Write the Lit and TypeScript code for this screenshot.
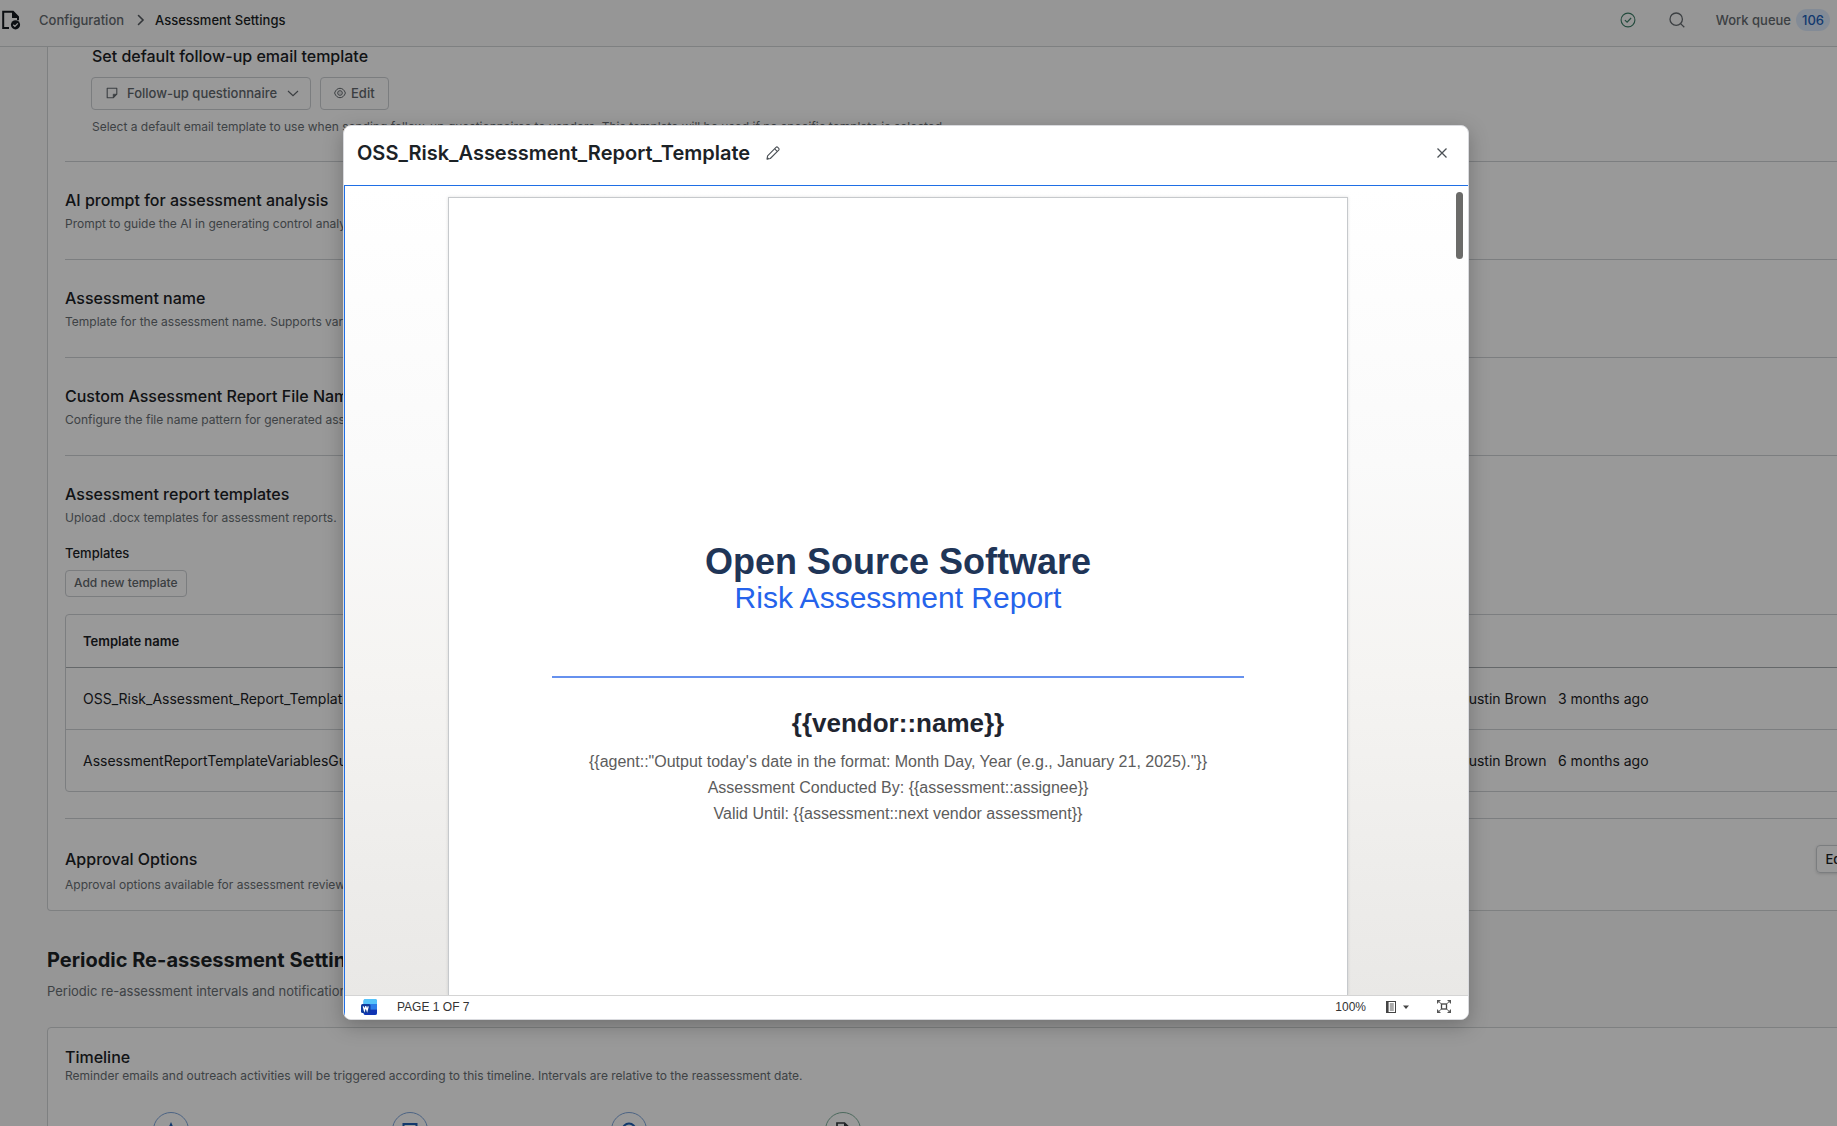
import { LitElement, html, css, svg, nothing } from "lit";
import { customElement, property } from "lit/decorators.js";

interface TemplateRow {
  name: string;
  author: string;
  uploaded: string;
}

const TEMPLATES: TemplateRow[] = [
  { name: "OSS_Risk_Assessment_Report_Template", author: "Austin Brown", uploaded: "3 months ago" },
  { name: "AssessmentReportTemplateVariablesGuide", author: "Austin Brown", uploaded: "6 months ago" },
];

const PLAIN_SECTIONS = [
  {
    title: "AI prompt for assessment analysis",
    text: "Prompt to guide the AI in generating control analysis.",
  },
  {
    title: "Assessment name",
    text: "Template for the assessment name. Supports variables.",
  },
  {
    title: "Custom Assessment Report File Name",
    text: "Configure the file name pattern for generated assessment reports.",
  },
];

const ICONS: Record<string, unknown> = {
  docCheck: svg`<path d="M8 18H2.2V1.8H12L17 7v3.2" fill="none" stroke="currentColor" stroke-width="2"/>
    <path d="M11 1v7h7z" fill="currentColor"/>
    <circle cx="14.5" cy="14.8" r="4.6" fill="currentColor"/>
    <path d="M12.3 14.8l1.6 1.6 2.9-3" fill="none" stroke="#fff" stroke-width="1.3"/>`,
  chevronRight: svg`<path d="M3.5 1.5L8 6l-4.5 4.5" fill="none" stroke="currentColor" stroke-width="1.6" stroke-linecap="round"/>`,
  chevronDown: svg`<path d="M1 4l5 4.6L11 4" fill="none" stroke="currentColor" stroke-width="1.2"/>`,
  checkCircle: svg`<circle cx="8" cy="8" r="6.9" fill="none" stroke="currentColor" stroke-width="1.1"/>
    <path d="M4.9 8.1l2.2 2.1 4-4.2" fill="none" stroke="currentColor" stroke-width="1.2"/>`,
  search: svg`<circle cx="7.2" cy="7.2" r="6.2" fill="none" stroke="currentColor" stroke-width="1.3"/>
    <path d="M11.6 11.6l3.7 3.7" stroke="currentColor" stroke-width="1.3"/>`,
  note: svg`<path d="M1.2 1.2h9.6v6L7.2 10.8h-6z" fill="none" stroke="currentColor" stroke-width="1.1" stroke-linejoin="round"/>
    <path d="M10.8 7.2H7.2v3.6z" fill="currentColor" stroke="currentColor" stroke-width=".6"/>`,
  eye: svg`<path d="M.6 6C1.6 3 3.6 1.3 6 1.3S10.4 3 11.4 6C10.4 9 8.4 10.7 6 10.7S1.6 9 .6 6z" fill="none" stroke="currentColor" stroke-width="1"/>
    <circle cx="6" cy="6" r="2.3" fill="none" stroke="currentColor" stroke-width="1"/><circle cx="6" cy="6" r=".5" fill="currentColor"/>`,
  pencil: svg`<path d="M1 13.2l.6-3.4L10 1.4c.5-.5 1.3-.5 1.8 0l.9.9c.5.5.5 1.3 0 1.8L4.3 12.5z" fill="none" stroke="currentColor" stroke-width="1.1" stroke-linejoin="round"/>
    <path d="M8.7 2.9l2.5 2.5" stroke="currentColor" stroke-width="1.1"/><path d="M1 13.2l2.3-.4-1.9-1.9z" fill="currentColor"/>`,
  close: svg`<path d="M1.5 1.5l9 9M10.5 1.5l-9 9" stroke="currentColor" stroke-width="1.3"/>`,
  word: svg`<rect x="2.5" y="0" width="13.5" height="16" rx="2" fill="#41a5ee"/>
    <path d="M4.5 0H14a2 2 0 0 1 2 2v3H2.5V2a2 2 0 0 1 2-2z" fill="#55c3fa"/>
    <path d="M2.5 5H16v5.5H2.5z" fill="#2b7de9"/>
    <path d="M2.5 10.5H16V14a2 2 0 0 1-2 2H4.5a2 2 0 0 1-2-2z" fill="#1034b4"/>
    <rect x="0" y="5" width="9.5" height="9" rx="1.5" fill="#0f3b9e"/>
    <path d="M2.3 7.3l1.1 4.2 1.3-3.8h.1l1.3 3.8 1.1-4.2" fill="none" stroke="#fff" stroke-width="1.3"/>`,
  outline: svg`<path d="M0 0h10v12H0z" fill="#444"/><path d="M2.6 1h6.4v10H2.6z" fill="#fff"/>
    <path d="M3.8 3h4M3.8 5h4M3.8 7h4M3.8 9h4" stroke="#555" stroke-width="1"/>`,
  caret: svg`<path d="M0 1.5h6L3 5z" fill="#444"/>`,
  fullscreen: svg`<rect x="4.5" y="4" width="5" height="5" fill="none" stroke="#444" stroke-width="1.3"/>
    <path d="M0 0h4L0 4zM14 0v4l-4-4zM0 13V9l4 4zM14 13h-4l4-4z" fill="#555"/>
    <path d="M1 1l3.500 3M13 1L9.500 4M1 12l3.500-3M13 12L9.500 9" stroke="#666" stroke-width="1"/>`,
  spark: svg`<path d="M8 0l2.2 5L14 8l-3.800 2.500L8 16l-2.200-5.500L2 8l3.800-3z" fill="currentColor"/>`,
  window: svg`<path d="M1.500 2h13v12h-13z" fill="none" stroke="currentColor" stroke-width="2"/><path d="M2 4.500l6 5 6-5" fill="none" stroke="currentColor" stroke-width="1.3"/>`,
  clock: svg`<circle cx="8" cy="8" r="6.5" fill="none" stroke="currentColor" stroke-width="2"/><path d="M8 4.500V8l2.500 2" fill="none" stroke="currentColor" stroke-width="1.5"/>`,
  doc: svg`<path d="M2 15V1h7.500L14 5.500V15z" fill="none" stroke="currentColor" stroke-width="1.7"/><path d="M9 1v5h5z" fill="currentColor"/>`,
};

@customElement("ui-icon")
export class UiIcon extends LitElement {
  @property() name = "";
  @property() box = "16 16";

  static styles = css`
    :host {
      display: inline-flex;
      flex: none;
    }
    svg {
      display: block;
    }
  `;

  render() {
    const [w, h] = this.box.split(" ");
    return html`<svg width=${w} height=${h} viewBox="0 0 ${w} ${h}" aria-hidden="true">${ICONS[this.name] ?? nothing}</svg>`;
  }
}

@customElement("top-bar")
export class TopBar extends LitElement {
  static styles = css`
    :host {
      display: block;
    }
    .bar {
      box-sizing: border-box;
      height: 47px;
      padding: 0 7px 6px 1px;
      display: flex;
      align-items: center;
      border-bottom: 1px solid #d2d5d8;
      background: #fafafa;
      font-size: 13px;
      line-height: 20px;
      font-weight: 500;
      color: #656b70;
    }
    .crumbs {
      flex: 1;
      display: flex;
      align-items: center;
    }
    .crumbs a {
      color: inherit;
      text-decoration: none;
      margin: 0 11px 0 18px;
    }
    .crumbs .sep {
      margin-right: 8px;
      color: #555b60;
    }
    .crumbs .current {
      color: #1a1f24;
    }
    .logo {
      color: #14191e;
    }
    .tools {
      display: flex;
      align-items: center;
    }
    button {
      display: flex;
      padding: 0;
      border: 0;
      background: none;
      font: inherit;
      color: inherit;
      cursor: pointer;
    }
    .status {
      color: #3b7d66;
      margin-right: 33px;
    }
    .search {
      margin-right: 31px;
    }
    .queue {
      align-items: center;
      gap: 5px;
    }
    .badge {
      padding: 1px 6px;
      border-radius: 11px;
      background: #dbe8fb;
      color: #2160b8;
    }
  `;

  render() {
    return html`
      <header class="bar">
        <nav class="crumbs" aria-label="Breadcrumb">
          <ui-icon class="logo" name="docCheck" box="20 20"></ui-icon>
          <a href="#configuration">Configuration</a>
          <ui-icon class="sep" name="chevronRight" box="12 12"></ui-icon>
          <span class="current">Assessment Settings</span>
        </nav>
        <div class="tools">
          <button class="status" aria-label="Status"><ui-icon name="checkCircle"></ui-icon></button>
          <button class="search" aria-label="Search"><ui-icon name="search"></ui-icon></button>
          <button class="queue">Work queue <span class="badge">106</span></button>
        </div>
      </header>
    `;
  }
}

@customElement("settings-page")
export class SettingsPage extends LitElement {
  static styles = css`
    :host {
      display: block;
      padding-left: 47px;
      /* The settings column is wider than the visible pane. */
      margin-right: -39px;
      color: #1c2226;
    }
    h2,
    h3,
    h4,
    p {
      margin: 0;
    }
    h3 {
      font-size: 16px;
      line-height: 18px;
      font-weight: 500;
    }
    p {
      font-size: 12px;
      line-height: 18px;
      color: #686e73;
    }
    .card {
      border: 1px solid #d2d5d8;
      border-radius: 4px;
      padding: 0 17px;
      background: #fff;
    }
    .card.first {
      border-top: 0;
      border-radius: 0 0 4px 4px;
    }
    .email {
      padding: 0 0 25px 27px;
    }
    .controls {
      display: flex;
      gap: 9px;
      margin: 12px 0 8px -1px;
    }
    .btn {
      box-sizing: border-box;
      display: inline-flex;
      align-items: center;
      border: 1px solid #cdd0d4;
      border-radius: 4px;
      background: none;
      font: 500 13px/20px Inter, sans-serif;
      color: #62686d;
      cursor: pointer;
    }
    .picker {
      height: 33px;
      padding: 0 11px 1px 14px;
      gap: 9px;
    }
    .picker select {
      appearance: none;
      border: 0;
      padding: 0;
      background: none;
      font: inherit;
      color: inherit;
    }
    .edit {
      height: 33px;
      padding: 0 13px 1px;
      gap: 5px;
    }
    .small {
      height: 27px;
      padding: 0 8px 1px;
      font-size: 12px;
    }
    .section {
      border-top: 1px solid #cfd2d5;
      padding: 29px 0 26px;
    }
    .section h3 + p {
      margin-top: 6px;
    }
    h4 {
      font-size: 13px;
      line-height: 18px;
      font-weight: 500;
      margin: 17px 0 8px;
    }
    .frame {
      margin-top: 17px;
      border: 1px solid #cfd2d5;
      border-radius: 4px;
    }
    table {
      width: 100%;
      border-collapse: separate;
      border-spacing: 0;
      table-layout: fixed;
      font-size: 14px;
      line-height: 20px;
    }
    th,
    td {
      padding: 0;
      height: 61px;
      font-weight: 400;
      text-align: left;
      white-space: nowrap;
    }
    th {
      height: 52px;
      font-size: 13px;
      font-weight: 600;
      border-bottom: 1px solid #a9adb1;
    }
    tr.ruled td {
      border-bottom: 1px solid #cfd2d5;
    }
    .name {
      padding-left: 17px;
    }
    .col-author {
      width: 99px;
    }
    .col-date {
      width: 299px;
    }
    .approval {
      padding: 26px 0 16px;
    }
    .row {
      display: flex;
      align-items: center;
      justify-content: space-between;
      margin-bottom: 3px;
    }
    .raised {
      height: 28px;
      padding: 0 8px 1px;
      color: #1c2226;
      box-shadow: 0 1px 3px rgba(0, 0, 0, 0.15);
    }
    h2 {
      margin-top: 37px;
      font-size: 20px;
      line-height: 24px;
      font-weight: 700;
    }
    .lead {
      margin: 10px 0 27px;
      font-size: 13px;
    }
    .timeline {
      padding-top: 20px;
    }
    .timeline h3 {
      margin-bottom: 1px;
    }
    .steps {
      display: grid;
      grid-template-columns: 239px 219px 214px 36px;
      margin: 27px 0 0;
      padding: 0 0 60px 88px;
      list-style: none;
    }
    .step {
      box-sizing: border-box;
      width: 36px;
      height: 36px;
      display: flex;
      align-items: center;
      justify-content: center;
      border: 1px solid #7fa6dc;
      border-radius: 50%;
      color: #1f5fb4;
    }
    .step.done {
      border-color: #7fb09c;
      color: #353b40;
    }
  `;

  render() {
    return html`
      <section class="card first">
        <div class="email">
          <h3 id="followup">Set default follow-up email template</h3>
          <div class="controls">
            <span class="btn picker">
              <ui-icon name="note" box="12 12"></ui-icon>
              <select aria-labelledby="followup">
                <option>Follow-up questionnaire</option>
              </select>
              <ui-icon name="chevronDown" box="12 12"></ui-icon>
            </span>
            <button class="btn edit"><ui-icon name="eye" box="12 12"></ui-icon>Edit</button>
          </div>
          <p>
            Select a default email template to use when sending follow-up questionnaires to vendors. This template will
            be used if no specific template is selected.
          </p>
        </div>
        ${PLAIN_SECTIONS.map(
          (s) => html`<div class="section">
            <h3>${s.title}</h3>
            <p>${s.text}</p>
          </div>`
        )}
        <div class="section">
          <h3>Assessment report templates</h3>
          <p>Upload .docx templates for assessment reports.</p>
          <h4>Templates</h4>
          <button class="btn small">Add new template</button>
          <div class="frame">
            <table>
              <colgroup>
                <col />
                <col class="col-author" />
                <col class="col-date" />
              </colgroup>
              <thead>
                <tr>
                  <th class="name" scope="col">Template name</th>
                  <th scope="col"></th>
                  <th scope="col"></th>
                </tr>
              </thead>
              <tbody>
                ${TEMPLATES.map(
                  (t, i) => html`<tr class=${i < TEMPLATES.length - 1 ? "ruled" : ""}>
                    <td class="name">${t.name}</td>
                    <td>${t.author}</td>
                    <td>${t.uploaded}</td>
                  </tr>`
                )}
              </tbody>
            </table>
          </div>
        </div>
        <div class="section approval">
          <div class="row">
            <h3>Approval Options</h3>
            <button class="btn raised">Edit</button>
          </div>
          <p>Approval options available for assessment reviews.</p>
        </div>
      </section>

      <h2>Periodic Re-assessment Settings</h2>
      <p class="lead">Periodic re-assessment intervals and notifications.</p>
      <section class="card timeline">
        <h3>Timeline</h3>
        <p>
          Reminder emails and outreach activities will be triggered according to this timeline. Intervals are relative
          to the reassessment date.
        </p>
        <ol class="steps">
          <li class="step"><ui-icon name="spark"></ui-icon></li>
          <li class="step"><ui-icon name="window"></ui-icon></li>
          <li class="step"><ui-icon name="clock"></ui-icon></li>
          <li class="step done"><ui-icon name="doc"></ui-icon></li>
        </ol>
      </section>
    `;
  }
}

@customElement("report-dialog")
export class ReportDialog extends LitElement {
  static styles = css`
    :host {
      display: flex;
      min-height: 0;
    }
    .dialog {
      flex: 1;
      min-width: 0;
      display: flex;
      flex-direction: column;
      overflow: hidden;
      border: 1px solid #d9dade;
      border-radius: 8px;
      background: #fff;
      box-shadow: 0 6px 20px rgba(0, 0, 0, 0.25);
    }
    button {
      display: flex;
      padding: 0;
      border: 0;
      background: none;
      font: inherit;
      color: inherit;
      cursor: pointer;
    }
    .head {
      height: 59px;
      padding: 0 20px 6px 13px;
      box-sizing: border-box;
      display: flex;
      align-items: center;
      color: #4b5055;
    }
    h1 {
      margin: 0 16px 0 0;
      font-size: 20px;
      line-height: 24px;
      font-weight: 600;
      color: #1c2226;
    }
    .x {
      margin-left: auto;
    }
    .viewer {
      flex: 1;
      min-height: 0;
      display: flex;
      flex-direction: column;
      border-top: 1px solid #1f6fe5;
      border-left: 1px solid #1f6fe5;
      font-family: "Liberation Sans", Arial, sans-serif;
    }
    .canvas {
      flex: 1;
      min-height: 0;
      overflow: hidden;
      display: grid;
      grid-template-columns: 103px minmax(0, 1fr) 120px;
      padding-top: 11px;
      background: linear-gradient(#ffffff, #fafafa 34%, #f5f4f2 60%, #e9e8e6);
    }
    .page {
      border: 1px solid #c6c9cc;
      border-bottom: 0;
      box-shadow: 0 0 3px rgba(0, 0, 0, 0.12);
      background: #fff;
      padding: 344px 103px 0;
      text-align: center;
      color: #5c5c5c;
      font-size: 16px;
      line-height: 26px;
      white-space: nowrap;
    }
    .page h2 {
      margin: 0;
      font-size: 36px;
      line-height: 40px;
      color: #1f3557;
    }
    .page h3 {
      margin: 0 0 62px;
      font-size: 30px;
      line-height: 32px;
      font-weight: 400;
      color: #2563eb;
    }
    .page hr {
      margin: 0 0 31px;
      border: 0;
      height: 2px;
      background: #6691ee;
    }
    .page h4 {
      margin: 0 0 12px;
      font-size: 26px;
      line-height: 28px;
      color: #1f2530;
    }
    .page p {
      margin: 0;
    }
    .scroll {
      justify-self: end;
      width: 7px;
      height: 67px;
      margin: -5px 5px 0 0;
      border-radius: 4px;
      background: #6b6b69;
    }
    .foot {
      height: 21px;
      border-top: 1px solid #d4d4d4;
      padding: 0 17px 2px 16px;
      display: flex;
      align-items: center;
      font-size: 12px;
      line-height: 16px;
      color: #333;
      background: #fff;
    }
    .pages {
      margin-left: 20px;
      flex: 1;
    }
    .mode {
      align-items: center;
      gap: 7px;
      margin: 0 28px 0 20px;
    }
  `;

  render() {
    return html`
      <section class="dialog" role="dialog" aria-labelledby="title">
        <div class="head">
          <h1 id="title">OSS_Risk_Assessment_Report_Template</h1>
          <button aria-label="Rename"><ui-icon name="pencil" box="14 14"></ui-icon></button>
          <button class="x" aria-label="Close"><ui-icon name="close" box="12 12"></ui-icon></button>
        </div>
        <div class="viewer">
          <div class="canvas">
            <span></span>
            <article class="page">
              <h2>Open Source Software</h2>
              <h3>Risk Assessment Report</h3>
              <hr />
              <h4>{{vendor::name}}</h4>
              <p>{{agent::"Output today's date in the format: Month Day, Year (e.g., January 21, 2025)."}}</p>
              <p>Assessment Conducted By: {{assessment::assignee}}</p>
              <p>Valid Until: {{assessment::next vendor assessment}}</p>
            </article>
            <div class="scroll"></div>
          </div>
          <div class="foot">
            <ui-icon name="word"></ui-icon>
            <span class="pages">PAGE 1 OF 7</span>
            <button>100%</button>
            <button class="mode" aria-label="View mode">
              <ui-icon name="outline" box="10 12"></ui-icon><ui-icon name="caret" box="6 6"></ui-icon>
            </button>
            <button aria-label="Full screen"><ui-icon name="fullscreen" box="14 13"></ui-icon></button>
          </div>
        </div>
      </section>
    `;
  }
}

@customElement("app-root")
export class AppRoot extends LitElement {
  static styles = css`
    :host {
      display: block;
      position: relative;
      height: 100vh;
      overflow: hidden;
      background: #fafafa;
      font-family: Inter, sans-serif;
    }
    .backdrop {
      position: absolute;
      inset: 0;
      box-sizing: border-box;
      padding: 125px 368px 106px 343px;
      display: grid;
      background: rgba(0, 0, 0, 0.4);
    }
  `;

  render() {
    return html`
      <top-bar></top-bar>
      <settings-page></settings-page>
      <div class="backdrop"><report-dialog></report-dialog></div>
    `;
  }
}
